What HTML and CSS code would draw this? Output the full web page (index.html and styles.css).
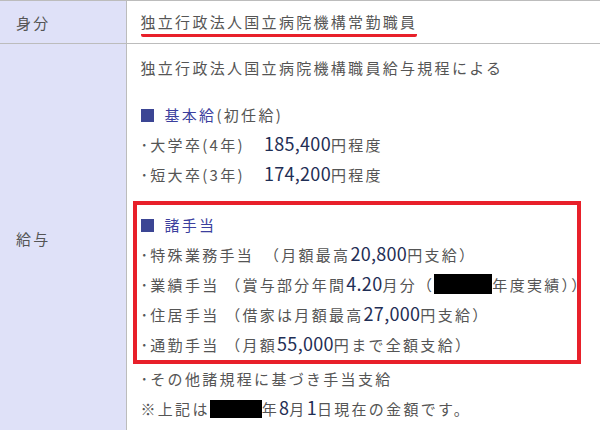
FILE: index.html
```html
<!DOCTYPE html>
<html lang="ja">
  <head>
    <meta charset="UTF-8" />
    <meta name="viewport" content="width=device-width, initial-scale=1.0" />
    <title>募集要項</title>
    <link rel="stylesheet" href="styles.css">
  </head>
  <body>
    <table class="info">
      <colgroup>
        <col class="col-head">
        <col>
      </colgroup>
      <tr class="row-top">
        <th>身分</th>
        <td><span class="mark-line">独立行政法人国立病院機構常勤職員</span></td>
      </tr>
      <tr>
        <th>給与</th>
        <td class="pay">
          <p>独立行政法人国立病院機構職員給与規程による</p>

          <div class="group">
            <p class="sub"><span class="sq"></span><span class="sub-title">基本給</span>(初任給)</p>
            <p>･大学卒(4年)<span class="num amount">185,400</span>円程度</p>
            <p>･短大卒(3年)<span class="num amount">174,200</span>円程度</p>
          </div>

          <!-- highlighted allowances -->
          <div class="allow">
            <p class="sub"><span class="sq"></span><span class="sub-title">諸手当</span></p>
            <p>･特殊業務手当　（月額最高<span class="num">20,800</span>円支給）</p>
            <p>･業績手当 （賞与部分年間<span class="num">4.20</span>月分（<span class="redact redact-wide"></span>年度実績））</p>
            <p>･住居手当 （借家は月額最高<span class="num">27,000</span>円支給）</p>
            <p>･通勤手当 （月額<span class="num">55,000</span>円まで全額支給）</p>
          </div>

          <p>･その他諸規程に基づき手当支給</p>
          <p>※上記は<span class="redact"></span>年<span class="num">8</span>月<span class="num">1</span>日現在の金額です。</p>
        </td>
      </tr>
    </table>
  </body>
</html>
```

FILE: styles.css
```css
body {
  margin: 0;
  padding: 0;
  background: #ffffff;
  font-family: "Noto Sans CJK JP", "Noto Sans", sans-serif;
  font-size: 15px;
  letter-spacing: 2.3px;
  color: #555555;
}

.info {
  width: 100%;
  table-layout: fixed;
  border-collapse: collapse;
  border-top: 1px solid #bcbcbc;
}

.col-head {
  width: 126px;
}

.info th {
  padding: 0 0 0 16px;
  background: #dfe1f8;
  border-right: 1px solid #bcbcbc;
  text-align: left;
  font-weight: normal;
  vertical-align: middle;
}

.info td {
  padding: 0 0 0 14px;
  vertical-align: top;
}

.row-top th,
.row-top td {
  height: 42px;
  border-bottom: 1px solid #bcbcbc;
  vertical-align: middle;
}

.mark-line {
  display: inline-block;
  line-height: 22px;
  padding-bottom: 1px;
  border-bottom: 3px solid #e8202a;
  border-radius: 2px;
  margin-top: 4px;
}

.pay {
  padding-top: 9px !important;
  padding-bottom: 8px !important;
}

.pay p {
  margin: 0;
  height: 30px;
  line-height: 30px;
  white-space: nowrap;
}

.group {
  margin-top: 17px;
}

.sq {
  display: inline-block;
  width: 13px;
  height: 13px;
  background: #3b4594;
  vertical-align: -1px;
  margin-right: 11px;
}

.sub-title {
  color: #3c3f9e;
}

.num {
  font-size: 18px;
  line-height: 0;
  letter-spacing: 0.3px;
  color: #1f2e55;
}

.amount {
  margin-left: 19px;
}

.allow {
  margin: 11px 19px 0 -8px;
  padding: 5px 4px 0;
  border: 4px solid #e8202a;
}

.redact {
  display: inline-block;
  width: 52px;
  height: 18px;
  background: #000000;
  vertical-align: -3px;
}

.redact-wide {
  width: 58px;
  height: 20px;
}
```
